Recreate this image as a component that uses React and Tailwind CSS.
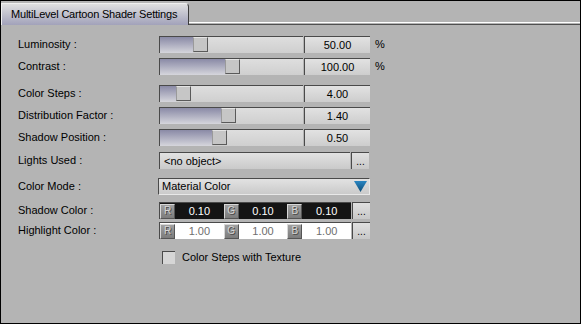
import React from 'react';

const font = { fontFamily: '"Liberation Sans", Arial, sans-serif' };

const Label = ({ children }) => (
  <div className="w-[141px] shrink-0 text-[11px] leading-none text-black">{children}</div>
);

const Slider = ({ pos }) => (
  <div className="flex h-[17px] w-[144px] border-t border-l border-[#4a4a4a] border-b-white border-r-white bg-gradient-to-b from-[#dedede] to-[#cfcfcf]">
    <div className="h-full bg-gradient-to-b from-[#8a8aa6] to-[#d6d6dc]" style={{ width: pos }} />
    <div className="h-[15px] w-[15px] shrink-0 border border-[#5a5a5a] border-t-[#e4e4e4] border-l-[#9a9a9a] bg-[#c6c6c6]" />
    <div className="flex-1" />
  </div>
);

const ValueBox = ({ value, unit }) => (
  <>
    <div className="ml-[1px] flex h-[17px] w-[66px] items-center justify-center border-t border-l border-[#4a4a4a] border-b-white border-r-white bg-gradient-to-b from-[#e2e2e2] to-[#cdcdcd] text-[11px] leading-none">
      {value}
    </div>
    {unit && <span className="ml-[5px] text-[11px] leading-none">{unit}</span>}
  </>
);

const SliderRow = ({ label, pos, value, unit, mt }) => (
  <div className={`flex items-center ${mt}`}>
    <Label>{label}</Label>
    <Slider pos={pos} />
    <ValueBox value={value} unit={unit} />
  </div>
);

const DotsButton = () => (
  <div className="ml-[1px] flex h-[17px] w-[18px] items-end justify-center border-t border-l border-[#4a4a4a] border-b-white border-r-white bg-gradient-to-b from-[#e0e0e0] to-[#c8c8c8] pb-[2px] text-[10px] leading-none">
    ...
  </div>
);

const Badge = ({ letter }) => (
  <div
    className="flex h-[15px] w-[15px] shrink-0 items-center justify-center border border-t-[#d8d8d8] border-l-[#d8d8d8] border-b-[#555] border-r-[#555] bg-gradient-to-b from-[#a0a0a0] to-[#7c7c7c] text-[10px] leading-none text-[#d4d4d4]"
    style={{ textShadow: '1px 1px 0 #4a4a4a' }}
  >
    {letter}
  </div>
);

const ColorRow = ({ label, values, dark, mt }) => (
  <div className={`flex items-center ${mt}`}>
    <Label>{label}</Label>
    <div className={`flex h-[17px] w-[192px] items-center border-t border-l border-[#4a4a4a] border-b-white border-r-white ${dark ? 'bg-[#141414]' : 'bg-white'}`}>
      {['R', 'G', 'B'].map((l, i) => (
        <React.Fragment key={l}>
          <Badge letter={l} />
          <div className={`flex h-full flex-1 items-center justify-center text-[11px] leading-none ${dark ? 'text-white' : 'text-[#6e6e6e]'}`}>
            {values[i]}
          </div>
        </React.Fragment>
      ))}
    </div>
    <DotsButton />
  </div>
);

export default function App() {
  return (
    <div className="flex h-[324px] w-[581px] flex-col overflow-hidden border border-black bg-[#b4b4b4]" style={font}>
      {/* Tab header */}
      <div className="flex h-[24px] shrink-0 items-end">
        <div className="flex h-[22px] w-[188px] shrink-0 items-center rounded-tr-[4px] border-t border-l border-r border-t-[#f0f0f0] border-l-[#f0f0f0] border-r-[#3c3c3c] bg-gradient-to-b from-[#e0e0e0] to-[#a2a2ba] pl-[9px] text-[11px] leading-none tracking-[-0.2px]">
          MultiLevel Cartoon Shader Settings
        </div>
        <div className="h-[3px] flex-1 border-t border-b border-t-white border-b-[#505050]" />
      </div>

      {/* Settings */}
      <div className="flex flex-col pl-[17px]">
        <SliderRow label="Luminosity :" pos={33} value="50.00" unit="%" mt="mt-[11px]" />
        <SliderRow label="Contrast :" pos={65} value="100.00" unit="%" mt="mt-[5px]" />
        <SliderRow label="Color Steps :" pos={16} value="4.00" mt="mt-[10px]" />
        <SliderRow label="Distribution Factor :" pos={61} value="1.40" mt="mt-[5px]" />
        <SliderRow label="Shadow Position :" pos={52} value="0.50" mt="mt-[5px]" />

        <div className="mt-[6px] flex items-center">
          <Label>Lights Used :</Label>
          <div className="flex h-[17px] w-[191px] items-center border-t border-l border-[#4a4a4a] border-b-white border-r-white bg-gradient-to-b from-[#e2e2e2] to-[#cacaca] pl-[4px] text-[11px] leading-none">
            &lt;no object&gt;
          </div>
          <DotsButton />
        </div>

        <div className="mt-[9px] flex items-center">
          <Label>Color Mode :</Label>
          <div className="-ml-[1px] flex h-[17px] w-[212px] items-center justify-between border border-[#4a4a4a] border-b-[#e8e8e8] border-r-[#e8e8e8] bg-gradient-to-b from-[#e2e2e2] to-[#cacaca] pl-[3px] pr-[2px] text-[11px] leading-none">
            <span>Material Color</span>
            <svg width="13" height="11" viewBox="0 0 13 11">
              <defs>
                <linearGradient id="tri" x1="0" y1="0" x2="0" y2="1">
                  <stop offset="0" stopColor="#2a86c2" />
                  <stop offset="1" stopColor="#0e4d78" />
                </linearGradient>
              </defs>
              <polygon points="0,0 13,0 6.5,11" fill="url(#tri)" />
            </svg>
          </div>
        </div>

        <ColorRow label="Shadow Color :" values={['0.10', '0.10', '0.10']} dark mt="mt-[7px]" />
        <ColorRow label="Highlight Color :" values={['1.00', '1.00', '1.00']} mt="mt-[3px]" />

        <div className="mt-[12px] flex items-center">
          <div className="ml-[144px] h-[13px] w-[13px] border-t border-l border-[#4a4a4a] border-b-white border-r-white bg-[#d6d6d6]" />
          <span className="ml-[7px] text-[11px] leading-none">Color Steps with Texture</span>
        </div>
      </div>
    </div>
  );
}
